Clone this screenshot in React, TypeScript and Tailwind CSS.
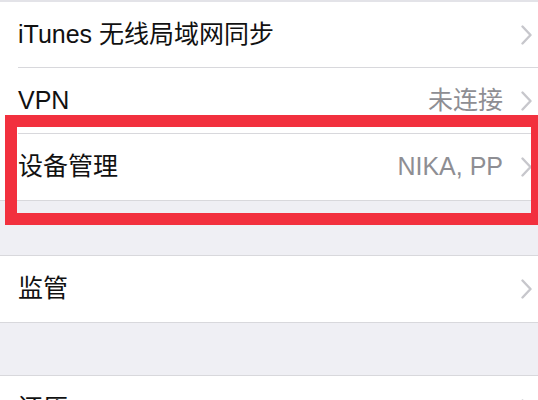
import type { ReactNode } from "react";

const Chevron = () => (
  <svg width="11" height="20" viewBox="0 0 11 20" className="shrink-0">
    <polyline
      points="1.5,1.5 9.5,10 1.5,18.5"
      fill="none"
      stroke="#c7c7cc"
      strokeWidth="2.4"
      strokeLinecap="round"
      strokeLinejoin="round"
    />
  </svg>
);

const Row = ({
  label,
  value,
  last,
}: {
  label: ReactNode;
  value?: string;
  last?: boolean;
}) => (
  <div className="bg-white pl-[18px]">
    <div
      className={`h-[66px] flex items-center pr-[6px] ${
        last ? "" : "border-b border-[#d8d8dc]"
      }`}
    >
      <span className="flex-1 text-[25px] text-[#111]">{label}</span>
      {value && (
        <span className="text-[25px] text-[#8e8e93] mr-[18px]">{value}</span>
      )}
      <Chevron />
    </div>
  </div>
);

const App = () => {
  return (
    <div
      className="w-[538px] h-[400px] overflow-hidden bg-[#efeff4] relative"
      style={{ fontFamily: '"Liberation Sans", "Noto Sans CJK SC", sans-serif' }}
    >
      <div className="h-[2px] bg-[#e3e3e8]" />
      {/* group: sync / vpn / device */}
      <div className="border-b border-[#d8d8dc]">
        <Row label="iTunes 无线局域网同步" />
        <Row label="VPN" value="未连接" />
        <Row label="设备管理" value="NIKA, PP" last />
      </div>

      <div className="h-[54px]" />

      <div className="border-y border-[#d8d8dc]">
        <Row label="监管" last />
      </div>

      <div className="h-[52px]" />

      <div className="border-t border-[#d8d8dc]">
        <Row label="还原" last />
      </div>

      {/* red annotation box */}
      <div className="absolute left-[5px] top-[115px] w-[538px] h-[110px] border-[12px] border-[#f2303e]" />
    </div>
  );
};

export default App;
